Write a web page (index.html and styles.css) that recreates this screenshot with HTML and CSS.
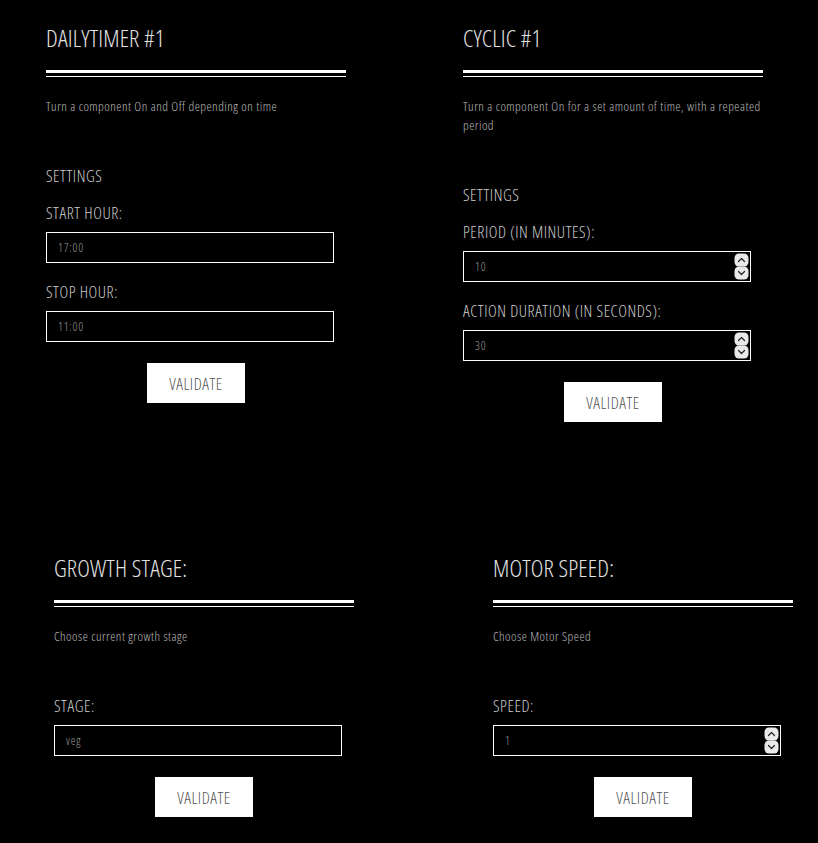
FILE: index.html
```html
<!DOCTYPE html>
<html lang="en">
<head>
<meta charset="utf-8">
<title>Controls</title>
<link rel="stylesheet" href="styles.css">
</head>
<body>
<main class="page">
  <div class="row row-top">
    <section class="card">
      <h2 class="title">DAILYTIMER #1</h2>
      <div class="rule"></div>
      <p class="desc">Turn a component On and Off depending on time</p>
      <h3 class="settings">SETTINGS</h3>
      <div class="field">
        <label class="label">START HOUR:</label>
        <div class="input-wrap"><input class="input" type="text" value="17:00"></div>
      </div>
      <div class="field">
        <label class="label">STOP HOUR:</label>
        <div class="input-wrap"><input class="input" type="text" value="11:00"></div>
      </div>
      <button class="btn">VALIDATE</button>
    </section>
    <section class="card">
      <h2 class="title">CYCLIC #1</h2>
      <div class="rule"></div>
      <p class="desc">Turn a component On for a set amount of time, with a repeated period</p>
      <h3 class="settings">SETTINGS</h3>
      <div class="field">
        <label class="label">PERIOD (IN MINUTES):</label>
        <div class="input-wrap">
          <input class="input num" type="number" value="10">
          <svg class="spin" width="15" height="27" viewBox="0 0 15 27" aria-hidden="true">
            <rect x="0.5" y="0.5" width="14" height="13" rx="4.5" fill="#e9e9e9"/>
            <rect x="0.5" y="13.5" width="14" height="13" rx="4.5" fill="#e9e9e9"/>
            <polyline points="4.5,8.5 7.5,5.5 10.5,8.5" fill="none" stroke="#222" stroke-width="1.2" stroke-linecap="round" stroke-linejoin="round"/>
            <polyline points="4.5,18.5 7.5,21.5 10.5,18.5" fill="none" stroke="#222" stroke-width="1.2" stroke-linecap="round" stroke-linejoin="round"/>
          </svg>
        </div>
      </div>
      <div class="field">
        <label class="label">ACTION DURATION (IN SECONDS):</label>
        <div class="input-wrap">
          <input class="input num" type="number" value="30">
          <svg class="spin" width="15" height="27" viewBox="0 0 15 27" aria-hidden="true">
            <rect x="0.5" y="0.5" width="14" height="13" rx="4.5" fill="#e9e9e9"/>
            <rect x="0.5" y="13.5" width="14" height="13" rx="4.5" fill="#e9e9e9"/>
            <polyline points="4.5,8.5 7.5,5.5 10.5,8.5" fill="none" stroke="#222" stroke-width="1.2" stroke-linecap="round" stroke-linejoin="round"/>
            <polyline points="4.5,18.5 7.5,21.5 10.5,18.5" fill="none" stroke="#222" stroke-width="1.2" stroke-linecap="round" stroke-linejoin="round"/>
          </svg>
        </div>
      </div>
      <button class="btn">VALIDATE</button>
    </section>
  </div>
  <div class="row row-bottom">
    <section class="card">
      <h2 class="title">GROWTH STAGE:</h2>
      <div class="rule"></div>
      <p class="desc">Choose current growth stage</p>
      <div class="field first">
        <label class="label">STAGE:</label>
        <div class="input-wrap"><input class="input" type="text" value="veg"></div>
      </div>
      <button class="btn">VALIDATE</button>
    </section>
    <section class="card">
      <h2 class="title">MOTOR SPEED:</h2>
      <div class="rule"></div>
      <p class="desc">Choose Motor Speed</p>
      <div class="field first">
        <label class="label">SPEED:</label>
        <div class="input-wrap">
          <input class="input num" type="number" value="1">
          <svg class="spin" width="15" height="27" viewBox="0 0 15 27" aria-hidden="true">
            <rect x="0.5" y="0.5" width="14" height="13" rx="4.5" fill="#e9e9e9"/>
            <rect x="0.5" y="13.5" width="14" height="13" rx="4.5" fill="#e9e9e9"/>
            <polyline points="4.5,8.5 7.5,5.5 10.5,8.5" fill="none" stroke="#222" stroke-width="1.2" stroke-linecap="round" stroke-linejoin="round"/>
            <polyline points="4.5,18.5 7.5,21.5 10.5,18.5" fill="none" stroke="#222" stroke-width="1.2" stroke-linecap="round" stroke-linejoin="round"/>
          </svg>
        </div>
      </div>
      <button class="btn">VALIDATE</button>
    </section>
  </div>
</main>
</body>
</html>
```
FILE: styles.css
```css
html, body {
  margin: 0;
  padding: 0;
  background: #000;
}
body {
  font-family: "Open Sans", "Roboto", sans-serif;
  font-stretch: 75%;
  font-weight: 300;
  color: #ddd;
}
.page {
  display: flex;
  flex-direction: column;
}
.row {
  display: flex;
  align-items: flex-start;
}
.row-top {
  padding-left: 46px;
  gap: 117px;
  height: 530px;
}
.row-bottom {
  padding-left: 54px;
  gap: 139px;
  height: 313px;
}
.card {
  width: 300px;
  display: flex;
  flex-direction: column;
}
.title {
  margin: 23px 0 0;
  font-size: 24px;
  line-height: 30px;
  font-weight: 300;
  color: #e2e2e2;
  letter-spacing: 0.15px;
}
.rule {
  margin-top: 17px;
  height: 3px;
  border-top: 3px solid #fff;
  border-bottom: 1px solid #fff;
}
.desc {
  margin: 20px -12px 0 0;
  font-size: 13px;
  line-height: 19px;
  color: #bbb;
  letter-spacing: 0.5px;
}
.settings {
  margin: 50px 0 0;
  font-size: 16.5px;
  line-height: 20px;
  font-weight: 300;
  color: #ccc;
  letter-spacing: 0.55px;
}
.field {
  display: flex;
  flex-direction: column;
  margin-top: 17px;
}
.field + .field {
  margin-top: 19px;
}
.field.first {
  margin-top: 50px;
}
.label {
  font-size: 16.5px;
  line-height: 20px;
  color: #ccc;
  letter-spacing: 0.55px;
}
.input-wrap {
  position: relative;
  margin-top: 9px;
  width: 288px;
  height: 31px;
}
.input {
  display: block;
  width: 100%;
  height: 100%;
  box-sizing: border-box;
  background: #000;
  border: 1px solid #fff;
  border-radius: 0;
  padding: 0 18px 0 11px;
  font-family: inherit;
  font-stretch: 75%;
  font-weight: 300;
  font-size: 12px;
  letter-spacing: 0.8px;
  color: #999;
  outline: none;
  -moz-appearance: textfield;
}
.num::-webkit-inner-spin-button,
.num::-webkit-outer-spin-button {
  -webkit-appearance: none;
  margin: 0;
  display: none;
}
.spin {
  position: absolute;
  right: 2px;
  top: 2px;
  display: block;
}
.btn {
  align-self: center;
  margin-top: 21px;
  width: 98px;
  height: 40px;
  background: #fff;
  border: none;
  border-radius: 0;
  font-family: inherit;
  font-stretch: 75%;
  font-weight: 300;
  font-size: 16.5px;
  letter-spacing: 0.55px;
  color: #555;
  padding: 0;
}
```
